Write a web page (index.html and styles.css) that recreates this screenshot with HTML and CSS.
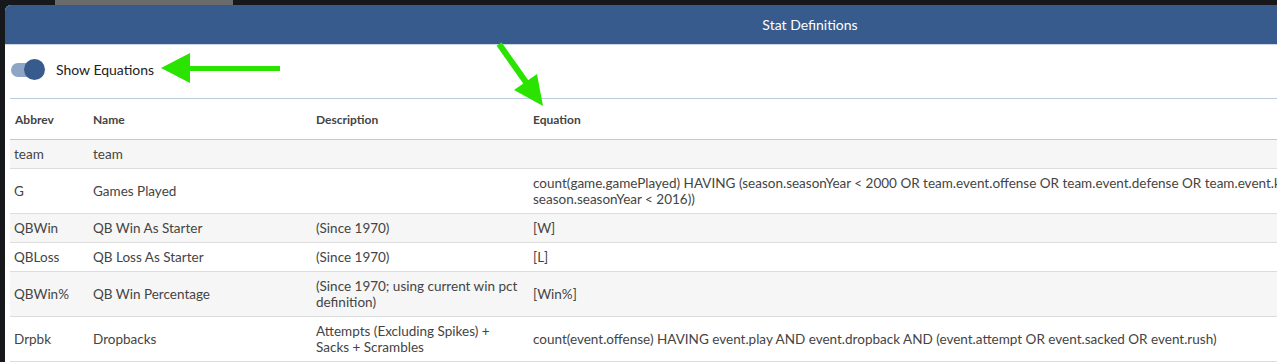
FILE: index.html
```html
<!DOCTYPE html>
<html lang="en">
<head>
    <meta charset="UTF-8">
    <title>Stat Definitions</title>
    <link rel="stylesheet" href="styles.css">
</head>
<body>
    <div class="topbar">
        <div class="topbar-block"></div>
    </div>

    <div class="modal">
        <div class="modal-header">Stat Definitions</div>
        <div class="modal-body">
            <div class="toggle-row">
                <span class="switch"></span>
                <span class="toggle-label">Show Equations</span>
            </div>

            <table class="stats">
                <thead>
                    <tr>
                        <th class="col-abbrev">Abbrev</th>
                        <th class="col-name">Name</th>
                        <th class="col-desc">Description</th>
                        <th>Equation</th>
                    </tr>
                </thead>
                <tbody>
                    <tr>
                        <td>team</td>
                        <td>team</td>
                        <td></td>
                        <td></td>
                    </tr>
                    <tr>
                        <td>G</td>
                        <td>Games Played</td>
                        <td></td>
                        <td>count(game.gamePlayed) HAVING (season.seasonYear &lt; 2000 OR team.event.offense OR team.event.defense OR team.event.kick OR (team.event.special AND<br>season.seasonYear &lt; 2016))</td>
                    </tr>
                    <tr>
                        <td>QBWin</td>
                        <td>QB Win As Starter</td>
                        <td>(Since 1970)</td>
                        <td>[W]</td>
                    </tr>
                    <tr>
                        <td>QBLoss</td>
                        <td>QB Loss As Starter</td>
                        <td>(Since 1970)</td>
                        <td>[L]</td>
                    </tr>
                    <tr>
                        <td>QBWin%</td>
                        <td>QB Win Percentage</td>
                        <td>(Since 1970; using current win pct definition)</td>
                        <td>[Win%]</td>
                    </tr>
                    <tr>
                        <td>Drpbk</td>
                        <td>Dropbacks</td>
                        <td>Attempts (Excluding Spikes) + Sacks + Scrambles</td>
                        <td>count(event.offense) HAVING event.play AND event.dropback AND (event.attempt OR event.sacked OR event.rush)</td>
                    </tr>
                </tbody>
            </table>
        </div>
    </div>

    <!-- annotation arrows drawn over the screenshot -->
    <svg class="annotations" width="1277" height="362" viewBox="0 0 1277 362">
        <line x1="280" y1="68.5" x2="186" y2="68.5" stroke="#2ae400" stroke-width="5"/>
        <polygon points="161,68 190,53 190,83" fill="#2ae400"/>
        <line x1="499" y1="44" x2="528" y2="85" stroke="#2ae400" stroke-width="6"/>
        <polygon points="543,106 514,90 537,74" fill="#2ae400"/>
    </svg>
</body>
</html>
```

FILE: styles.css
```css
body {
    margin: 0;
    height: 362px;
    overflow: hidden;
    background-color: #16181c;
    font-family: Lato, 'Open Sans', sans-serif;
    color: #444;
    position: relative;
}

.topbar {
    height: 5px;
    display: flex;
}

.topbar-block {
    margin-left: 55px;
    width: 178px;
    background-color: #6b6b6b;
}

.modal {
    margin-left: 5px;
    width: 1610px;
    background-color: white;
    border-radius: 6px 6px 0 0;
    overflow: hidden;
}

.modal-header {
    height: 40px;
    background-color: #365b8c;
    color: white;
    font-size: 14px;
    display: flex;
    align-items: center;
    justify-content: center;
    border-bottom: 1px solid #c9d6e6;
    box-sizing: border-box;
}

.modal-body {
    padding: 0 5px;
}

.toggle-row {
    height: 53px;
    box-sizing: border-box;
    padding: 0 0 4px 1px;
    display: flex;
    align-items: center;
    gap: 11px;
}

.switch {
    position: relative;
    width: 34px;
    height: 22px;
}

.switch::before {
    content: '';
    position: absolute;
    left: 0;
    top: 4px;
    width: 30px;
    height: 14px;
    border-radius: 7px;
    background-color: #8da6c6;
}

.switch::after {
    content: '';
    position: absolute;
    right: 0;
    top: 0;
    width: 21px;
    height: 21px;
    border-radius: 50%;
    background-color: #365b8c;
}

.toggle-label {
    font-size: 14px;
    color: #222;
}

.stats {
    width: 1600px;
    border-collapse: collapse;
    border-top: 1px solid #bccbdd;
    table-layout: fixed;
}

.stats th {
    text-align: left;
    font-size: 12px;
    font-weight: 700;
    color: #444;
    height: 40px;
    padding: 0 5px;
    border-bottom: 1px solid #bccbdd;
}

.col-abbrev {
    width: 68px;
}

.col-name {
    width: 213px;
}

.col-desc {
    width: 207px;
}

.stats td {
    font-size: 13.5px;
    line-height: 16px;
    padding: 6px 4px 6px 5px;
    border-bottom: 1px solid #dcdcdc;
    color: #444;
    vertical-align: middle;
}

.stats td:first-child {
    padding-left: 4px;
}

.stats tbody tr:nth-child(odd) {
    background-color: #f6f6f6;
}

.annotations {
    position: absolute;
    left: 0;
    top: 0;
    pointer-events: none;
}
```
